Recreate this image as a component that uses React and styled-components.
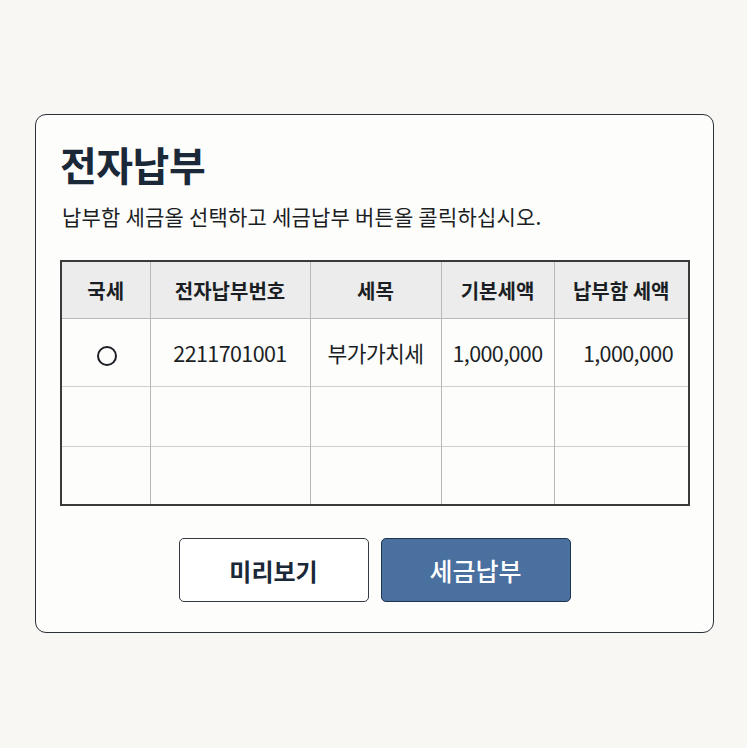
import React from "react";
import styled, { createGlobalStyle } from "styled-components";

const Global = createGlobalStyle`
  html, body { margin: 0; padding: 0; background: #f8f7f4; }
  body { font-family: "Noto Sans CJK KR", "Noto Sans", sans-serif; color: #1b1f24; }
`;

const Page = styled.div`
  width: 747px;
  height: 748px;
  padding: 114px 0 0 35px;
  box-sizing: border-box;
`;

const Card = styled.div`
  width: 679px;
  height: 519px;
  box-sizing: border-box;
  background: #fdfdfc;
  border: 1.5px solid #2b3038;
  border-radius: 11px;
  padding: 23px 24px 0 24px;
  display: flex;
  flex-direction: column;
`;

const Title = styled.h1`
  margin: 0;
  font-size: 40px;
  font-weight: 700;
  line-height: 52px;
  color: #1a2838;
  letter-spacing: -0.5px;
`;

const Subtitle = styled.p`
  margin: 11px 0 0 2px;
  font-size: 21px;
  line-height: 30px;
  color: #1b1f24;
  letter-spacing: 0.2px;
`;

const Table = styled.table`
  margin-top: 29px;
  width: 628px;
  border-collapse: collapse;
  border: 2px solid #3a3a3a;
  table-layout: fixed;
`;

const Th = styled.th`
  height: 56px;
  background: #ececec;
  font-size: 20px;
  font-weight: 700;
  color: #1b1f24;
  border-left: 1px solid #b8b8b8;
  border-bottom: 1px solid #b8b8b8;
  padding: 0;
  text-align: center;
  letter-spacing: 0;
`;

const Td = styled.td`
  height: ${(p) => p.$h}px;
  border-left: 1px solid #b8b8b8;
  border-top: 1px solid #d0d0d0;
  font-size: 21.5px;
  color: #1b1f24;
  padding: ${(p) => (p.$right ? "0 15px 0 0" : "0")};
  text-align: ${(p) => (p.$right ? "right" : "center")};
  letter-spacing: -0.6px;
  white-space: nowrap;
`;

const Radio = styled.span`
  display: inline-block;
  width: 20px;
  height: 20px;
  box-sizing: border-box;
  border: 2px solid #1b1f24;
  border-radius: 50%;
  vertical-align: middle;
  margin-left: 2px;
`;

const Buttons = styled.div`
  display: flex;
  justify-content: center;
  gap: 12px;
  margin-top: 32px;
`;

const Button = styled.button`
  width: 190px;
  height: 64px;
  border-radius: 5px;
  font-family: inherit;
  font-size: ${(p) => (p.$primary ? 25 : 24)}px;
  cursor: pointer;
  border: 1.5px solid ${(p) => (p.$primary ? "#1f3550" : "#333a42")};
  background: ${(p) => (p.$primary ? "#4a70a0" : "#ffffff")};
  color: ${(p) => (p.$primary ? "#ffffff" : "#1a2838")};
  font-weight: ${(p) => (p.$primary ? 500 : 700)};
  letter-spacing: 0;
`;

const cols = [89, 160, 131, 113, 135];

export default function App() {
  return (
    <>
      <Global />
      <Page>
        <Card>
          <Title>전자납부</Title>
          <Subtitle>납부함 세금올 선택하고 세금납부 버튼올 콜릭하십시오.</Subtitle>
          <Table>
            <colgroup>
              {cols.map((w, i) => (
                <col key={i} style={{ width: w }} />
              ))}
            </colgroup>
            <thead>
              <tr>
                <Th>국세</Th>
                <Th>전자납부번호</Th>
                <Th>세목</Th>
                <Th>기본세액</Th>
                <Th>납부함 세액</Th>
              </tr>
            </thead>
            <tbody>
              <tr>
                <Td $h={67}><Radio /></Td>
                <Td $h={67}>2211701001</Td>
                <Td $h={67}>부가가치세</Td>
                <Td $h={67}>1,000,000</Td>
                <Td $h={67} $right>1,000,000</Td>
              </tr>
              {[59, 57].map((h, r) => (
                <tr key={r}>
                  {cols.map((_, i) => (
                    <Td key={i} $h={h} />
                  ))}
                </tr>
              ))}
            </tbody>
          </Table>
          <Buttons>
            <Button>미리보기</Button>
            <Button $primary>세금납부</Button>
          </Buttons>
        </Card>
      </Page>
    </>
  );
}
